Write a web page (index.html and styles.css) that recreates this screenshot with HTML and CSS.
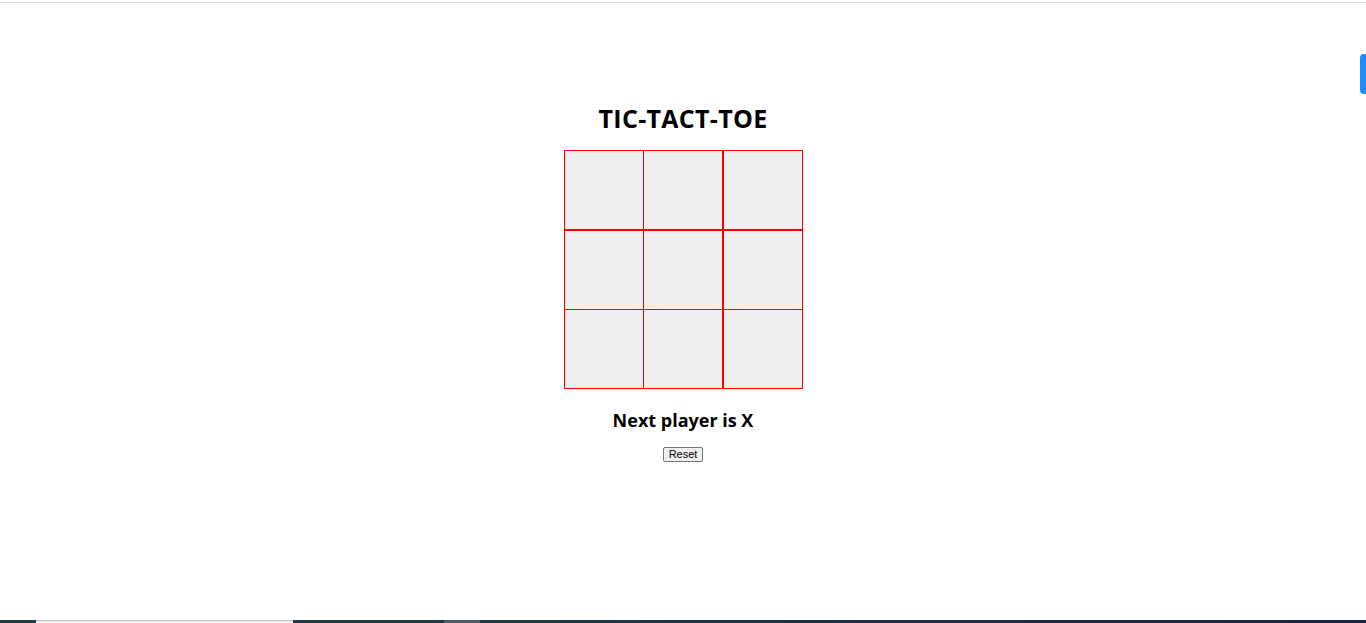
FILE: index.html
```html
<!DOCTYPE html>
<html>
<head>
<meta charset="utf-8">
<link rel="stylesheet" href="styles.css">
</head>
<body>
<div class="topline"></div>
<main class="game">
  <h1 class="title">TIC-TACT-TOE</h1>
  <div class="board">
    <div class="row">
      <div class="cell"></div><div class="cell c2"></div><div class="cell"></div>
    </div>
    <div class="row">
      <div class="cell"></div><div class="cell c2"></div><div class="cell"></div>
    </div>
    <div class="row r3">
      <div class="cell"></div><div class="cell c2"></div><div class="cell"></div>
    </div>
  </div>
  <h3 class="status">Next player is X</h3>
  <button class="reset">Reset</button>
</main>
<div class="sidetab"></div>
<div class="bottombar">
  <div class="seg light"></div>
  <div class="seg dark1"></div>
  <div class="seg gray"></div>
  <div class="seg dark2"></div>
</div>
</body>
</html>
```

FILE: styles.css
```css
html, body {
  margin: 0;
  padding: 0;
  background: #ffffff;
  height: 623px;
  overflow: hidden;
}
body {
  font-family: "Open Sans", "Noto Sans", sans-serif;
  position: relative;
}
.topline {
  height: 2px;
  border-bottom: 1px solid #dedede;
}
.game {
  display: flex;
  flex-direction: column;
  align-items: center;
  padding-top: 98px;
}
.title {
  margin: 0;
  font-size: 25px;
  line-height: 34px;
  font-weight: 700;
  color: #000;
  letter-spacing: 0.3px;
}
.board {
  margin-top: 15px;
  display: flex;
  flex-direction: column;
}
.row {
  display: flex;
}
.row.r3 {
  margin-top: -1px;
}
.cell {
  box-sizing: border-box;
  width: 80px;
  height: 80px;
  border: 1px solid #ff0000;
  background: #efefef;
}
.cell.c2 {
  margin-left: -1px;
}
.status {
  margin: 18px 0 0;
  font-size: 18px;
  line-height: 26px;
  font-weight: 700;
  color: #000;
}
.reset {
  margin-top: 14px;
  font-family: "Liberation Sans", Arial, sans-serif;
  font-size: 11px;
  line-height: 13px;
  height: 15px;
  padding: 0 5px;
  color: #000;
  background: #efefef;
  border: 1px solid #767676;
  border-radius: 2px;
}
.sidetab {
  position: absolute;
  right: 0;
  top: 54px;
  width: 6px;
  height: 40px;
  background: #1a8cff;
  border-radius: 4px 0 0 4px;
}
.bottombar {
  position: absolute;
  left: 0;
  right: 0;
  bottom: 0;
  height: 3px;
  display: flex;
  background: #1f3a45;
}
.seg.light {
  margin-left: 36px;
  width: 257px;
  background: #f0f0f0;
  border-top: 1px solid #c4c4c4;
  box-sizing: border-box;
}
.seg.dark1 {
  width: 151px;
}
.seg.gray {
  width: 36px;
  background: #4d6068;
}
.seg.dark2 {
  flex: 1;
  background: linear-gradient(90deg, #1f3a45, #1a2244);
}
```
